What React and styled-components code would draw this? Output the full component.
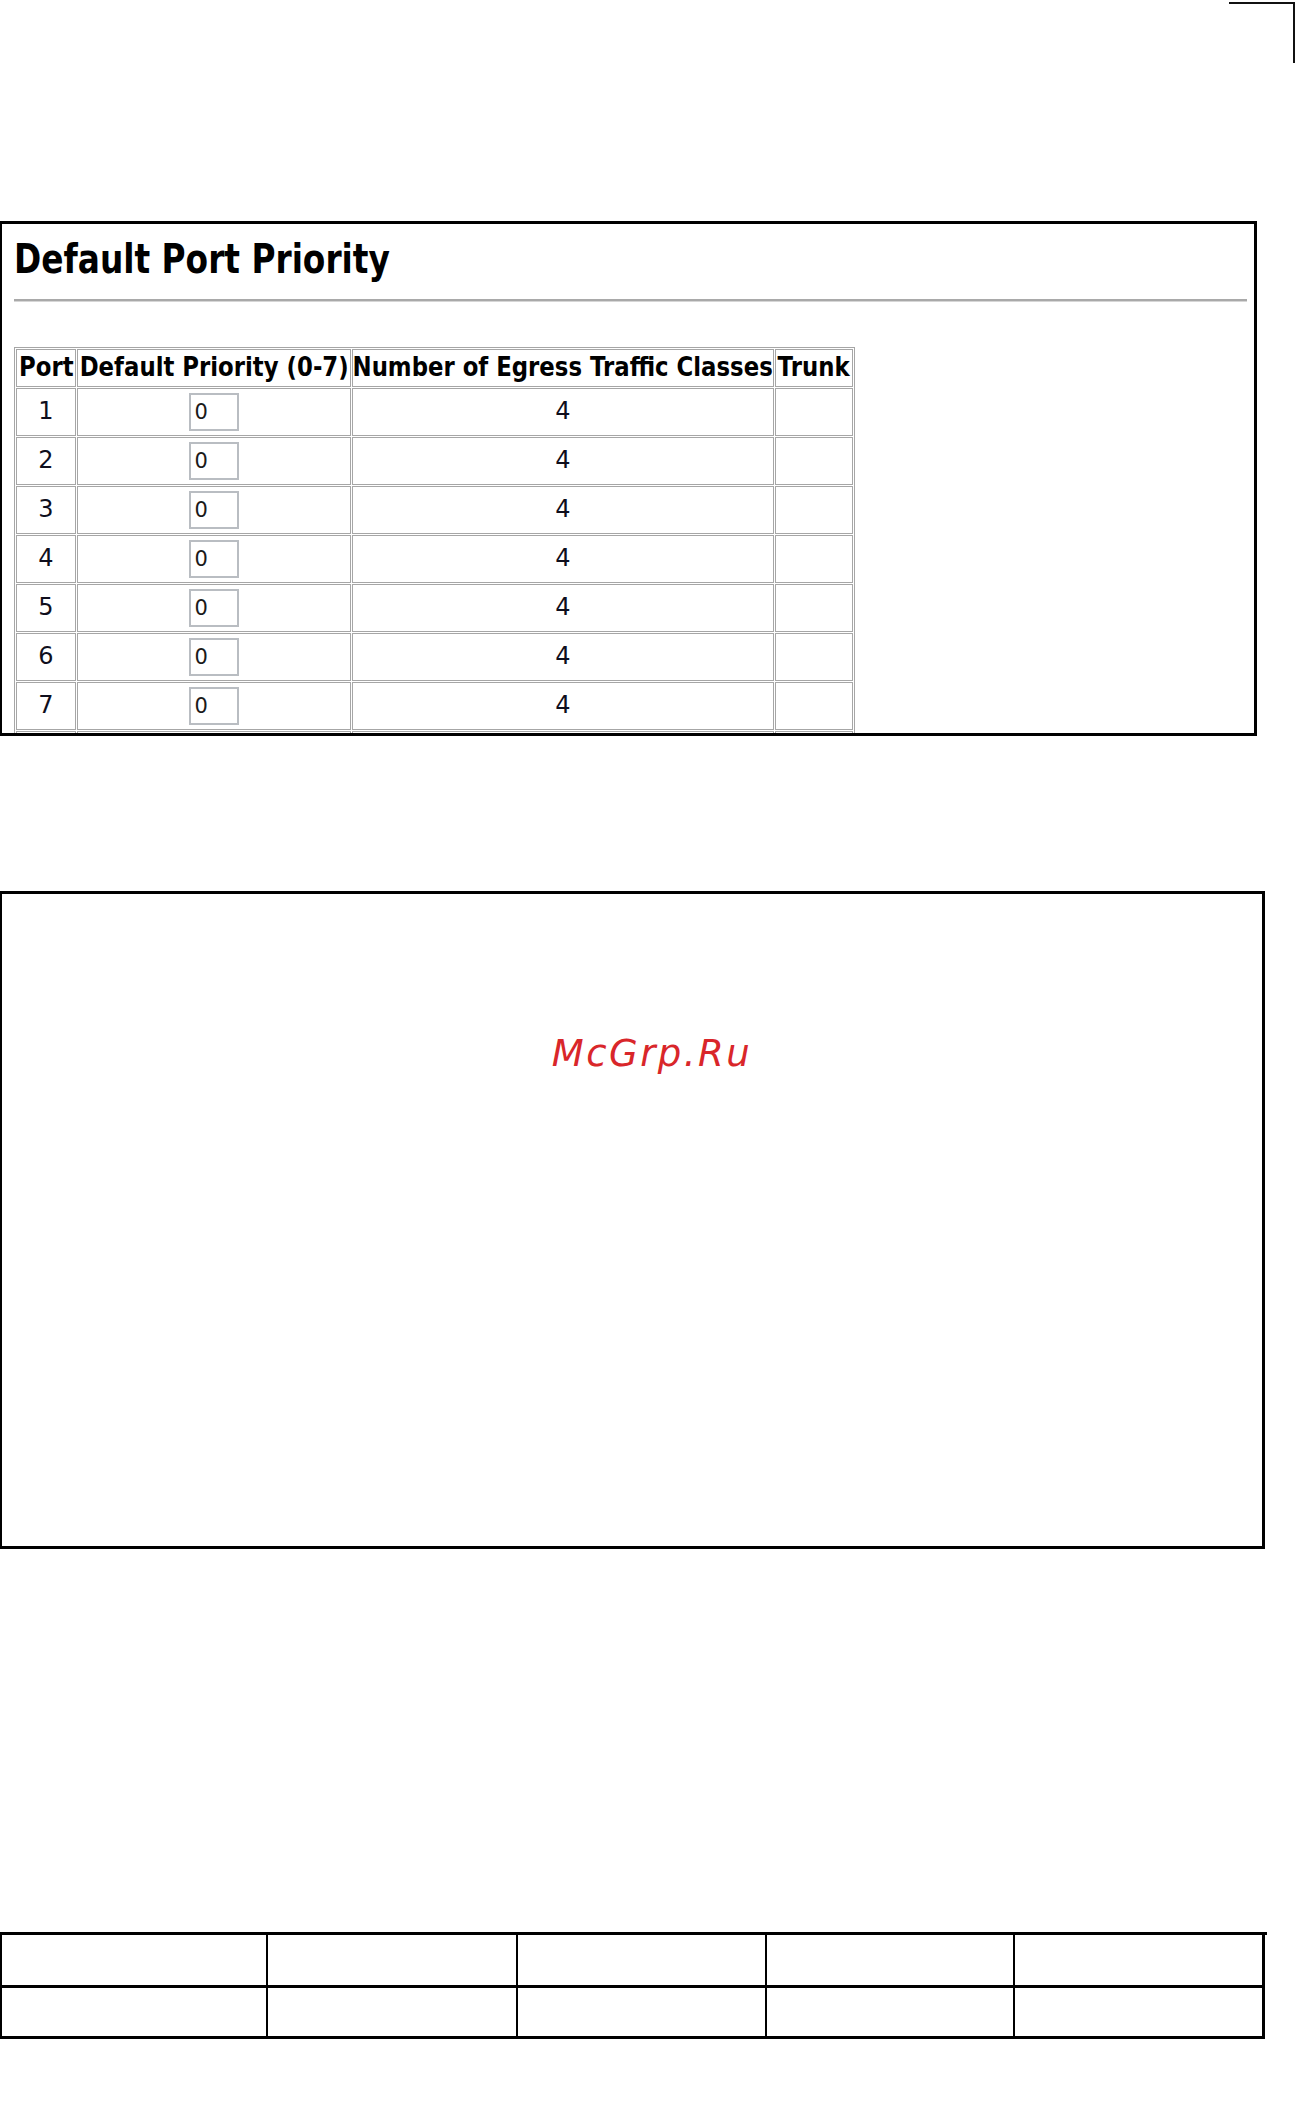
import React from "react";
import styled, { createGlobalStyle } from "styled-components";

const GlobalStyle = createGlobalStyle`
  html, body {
    margin: 0;
    padding: 0;
    background: #fff;
  }
  body {
    font-family: "DejaVu Sans", "Liberation Sans", sans-serif;
    color: #111;
  }
`;

const Page = styled.div`
  width: 1297px;
  min-height: 2107px;
  display: flex;
  flex-direction: column;
`;

const TopBar = styled.div`
  height: 221px;
  display: flex;
  justify-content: flex-end;
  align-items: flex-start;
  padding: 2px 2px 0 0;
  box-sizing: border-box;
`;

const CropMark = styled.div`
  width: 64px;
  height: 59px;
  border-top: 2px solid #111;
  border-right: 2px solid #111;
`;

const Panel = styled.div`
  box-sizing: border-box;
  width: ${(p) => p.$width}px;
  height: ${(p) => p.$height}px;
  border: 3px solid #000;
  border-left-width: 2px;
  overflow: hidden;
  padding: ${(p) => p.$pad || "0"};
`;

const Title = styled.h1`
  margin: 0;
  font-family: "DejaVu Sans", sans-serif;
  font-weight: bold;
  font-size: 40px;
  line-height: 40px;
  color: #000;
  white-space: nowrap;
  span {
    display: inline-block;
    transform: scaleX(0.82);
    transform-origin: left center;
  }
`;

const Rule = styled.div`
  margin: 20px 0 0 0;
  height: 2px;
  background: #a9a9a9;
  border-bottom: 1px solid #d6d6d6;
`;

const PortTable = styled.table`
  margin-top: 45px;
  width: 841px;
  table-layout: fixed;
  border-collapse: separate;
  border-spacing: 1px;
  border: 1px solid #a6a6a6;
  color: #0e0e1c;
`;

const HeadCell = styled.th`
  box-sizing: border-box;
  width: ${(p) => p.$w}px;
  height: 38px;
  padding: 0 0 3px 0;
  border: 1px solid #a6a6a6;
  font-family: "DejaVu Sans", sans-serif;
  font-weight: bold;
  font-size: 27px;
  color: #000;
`;

const HeadLabel = styled.div`
  display: flex;
  justify-content: center;
  white-space: nowrap;
  span {
    display: inline-block;
    transform: scaleX(0.845);
    transform-origin: center;
  }
`;

const Cell = styled.td`
  box-sizing: border-box;
  height: 48px;
  padding: 0 0 2px 0;
  border: 1px solid #a6a6a6;
  text-align: center;
  vertical-align: middle;
  font-family: "DejaVu Sans", sans-serif;
  font-size: 24px;
`;

const PriorityInput = styled.input`
  box-sizing: border-box;
  width: 50px;
  height: 38px;
  margin: 2px 0 0 -1px;
  padding: 0 0 0 4px;
  border: 2px solid #b9bdc2;
  font-family: "DejaVu Sans", sans-serif;
  font-size: 21px;
  color: #1a1a1a;
  background: #fff;
  vertical-align: middle;
`;

const Watermark = styled.div`
  text-align: center;
  font-family: "DejaVu Sans", sans-serif;
  font-style: italic;
  font-size: 37px;
  line-height: 37px;
  letter-spacing: 2.5px;
  color: #d9262a;
`;

const Spacer = styled.div`
  height: ${(p) => p.$h}px;
  flex-shrink: 0;
`;

const Grid = styled.div`
  display: grid;
  grid-template-columns: 266px 250px 249px 248px 250px;
  grid-template-rows: 53px 51px;
  width: 1265px;
  border-top: 3px solid #000;
  border-left: 2px solid #000;
`;

const GridCell = styled.div`
  border-right: ${(p) => (p.$last ? 3 : 2)}px solid #000;
  border-bottom: 3px solid #000;
`;

const ports = [1, 2, 3, 4, 5, 6, 7, 8];
const heads = [
  { label: "Port", w: 60 },
  { label: "Default Priority (0-7)", w: 274 },
  { label: "Number of Egress Traffic Classes", w: 422 },
  { label: "Trunk", w: 78 },
];

export default function App() {
  return (
    <Page>
      <GlobalStyle />
      <TopBar>
        <CropMark />
      </TopBar>

      <Panel $width={1257} $height={515} $pad="15px 7px 0 12px">
        <Title>
          <span>Default Port Priority</span>
        </Title>
        <Rule />
        <PortTable>
          <thead>
            <tr>
              {heads.map((h) => (
                <HeadCell key={h.label} $w={h.w}>
                  <HeadLabel>
                    <span>{h.label}</span>
                  </HeadLabel>
                </HeadCell>
              ))}
            </tr>
          </thead>
          <tbody>
            {ports.map((p) => (
              <tr key={p}>
                <Cell>{p}</Cell>
                <Cell>
                  <PriorityInput defaultValue="0" />
                </Cell>
                <Cell>4</Cell>
                <Cell />
              </tr>
            ))}
          </tbody>
        </PortTable>
      </Panel>

      <Spacer $h={155} />

      <Panel $width={1265} $height={658} $pad="141px 0 0 40px">
        <Watermark>McGrp.Ru</Watermark>
      </Panel>

      <Spacer $h={383} />

      <Grid>
        {Array.from({ length: 10 }).map((_, i) => (
          <GridCell key={i} $last={i % 5 === 4} />
        ))}
      </Grid>
    </Page>
  );
}
